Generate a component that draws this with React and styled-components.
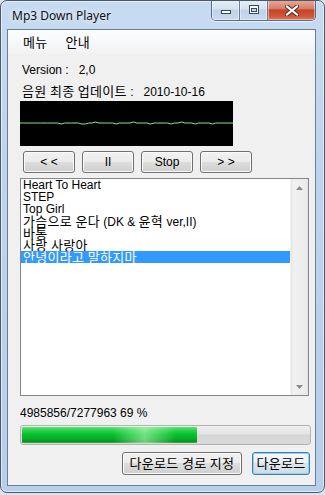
import React from 'react';
import styled, { createGlobalStyle } from 'styled-components';

const Global = createGlobalStyle`
  html, body { margin: 0; padding: 0; }
  body {
    width: 325px; height: 495px; overflow: hidden;
    background: #d9e4ef;
    font-family: "Liberation Sans", "Noto Sans CJK KR", sans-serif;
  }
`;

const FONT = `"Liberation Sans", "Noto Sans CJK KR", sans-serif`;

const Win = styled.div`
  box-sizing: border-box;
  width: 325px;
  height: 493px;
  border: 1px solid #4a5a6c;
  border-radius: 7px;
  background: linear-gradient(180deg, #c6dbf1 0%, #bcd4ed 35%, #b6cfea 100%);
  box-shadow: inset 0 0 0 1px rgba(255, 255, 255, 0.55);
  display: flex;
  flex-direction: column;
  padding: 0 8px 6px 6px;
  overflow: hidden;
`;

const TitleBar = styled.div`
  height: 28px;
  display: flex;
  align-items: flex-start;
  flex-shrink: 0;
`;

const Title = styled.div`
  padding: 9px 0 0 5px;
  font: 12px/12px "Noto Sans", "Liberation Sans", sans-serif;
  color: #111;
  text-shadow: 0 0 6px rgba(255, 255, 255, 0.9);
`;

const Caption = styled.div`
  margin-left: auto;
  margin-right: 0;
  margin-top: -1px;
  height: 20px;
  display: flex;
  border: 1px solid #5b6c82;
  border-top: none;
  border-radius: 0 0 5px 5px;
  overflow: hidden;
  box-shadow: 0 1px 0 rgba(255, 255, 255, 0.6);
`;

const CapBtn = styled.div`
  width: ${(p) => p.$w}px;
  display: flex;
  align-items: center;
  justify-content: center;
  border-left: ${(p) => (p.$first ? 'none' : '1px solid #6c7d92')};
  background: ${(p) =>
    p.$close
      ? 'linear-gradient(180deg, #e8ab9c 0%, #d98068 42%, #c6442b 50%, #cf5536 80%, #dd7a5a 100%)'
      : 'linear-gradient(180deg, #e6eef7 0%, #d5e2f0 45%, #bfd2e8 50%, #c8daef 100%)'};
  box-shadow: inset 0 0 0 1px rgba(255, 255, 255, 0.45);
`;

const Client = styled.div`
  flex: 1;
  display: flex;
  flex-direction: column;
  border: 1px solid #6e7e90;
  background: #f0f0f0;
`;

const MenuBar = styled.div`
  height: 23px;
  display: flex;
  padding-left: 6px;
  background: linear-gradient(180deg, #fcfdfd 0%, #f6f7f9 60%, #f1f3f5 100%);
  flex-shrink: 0;
`;

const MenuItem = styled.div`
  padding: 0 9px;
  font: 12px/23px ${FONT};
  color: #000;
`;

const Ko = styled.span`
  font-family: "Noto Sans CJK KR", sans-serif;
  font-size: 13px;
  letter-spacing: 0.3px;
`;

const Body = styled.div`
  display: flex;
  flex-direction: column;
  padding: 0 4px 0 12px;
`;

const Label = styled.div`
  margin-top: ${(p) => p.$mt}px;
  padding-left: ${(p) => p.$pl || 0}px;
  font: 12px/12px ${FONT};
  color: #000;
  white-space: pre;
  height: 12px;
`;

const Visual = styled.div`
  margin-top: 4px;
  width: 213px;
  height: 45px;
  background: #000;
  display: flex;
  align-items: center;
`;

const Controls = styled.div`
  margin-top: 5px;
  padding-left: 3px;
  display: flex;
  gap: 7px;
`;

const Btn = styled.button`
  box-sizing: border-box;
  width: ${(p) => p.$w}px;
  height: ${(p) => p.$h || 22}px;
  padding: 0;
  border: 1px solid ${(p) => (p.$focus ? '#3c7fb1' : '#707070')};
  border-radius: 3px;
  background: ${(p) =>
    p.$focus
      ? 'linear-gradient(180deg, #f4f8fb 0%, #eaf0f5 50%, #dbe4ec 50%, #d2dce5 100%)'
      : 'linear-gradient(180deg, #f2f2f2 0%, #ebebeb 50%, #dddddd 50%, #cfcfcf 100%)'};
  box-shadow: inset 0 0 0 1px ${(p) => (p.$focus ? '#8fd0f3' : '#fbfbfb')};
  font: 12px/12px ${FONT};
  color: #000;
  white-space: pre;
`;

const List = styled.div`
  margin-top: 5px;
  box-sizing: border-box;
  width: 289px;
  height: 218px;
  border: 1px solid #828790;
  background: #fff;
  display: flex;
`;

const Items = styled.div`
  flex: 1;
  display: flex;
  flex-direction: column;
`;

const Item = styled.div`
  height: 12px;
  padding-left: 2px;
  font: 12px/12px ${FONT};
  white-space: pre;
  color: ${(p) => (p.$sel ? '#fff' : '#000')};
  background: ${(p) => (p.$sel ? '#3399ff' : 'transparent')};
`;

const ScrollBar = styled.div`
  width: 17px;
  display: flex;
  flex-direction: column;
  justify-content: space-between;
  align-items: center;
  background: linear-gradient(90deg, #e4e4e4 0%, #f1f1f1 15%, #ececec 85%, #e2e2e2 100%);
  border-left: 1px solid #f6f6f6;
`;

const Arrow = styled.div`
  width: 17px;
  height: 17px;
  display: flex;
  align-items: center;
  justify-content: center;
`;

const Track = styled.div`
  margin-top: 6px;
  box-sizing: border-box;
  width: 291px;
  height: 20px;
  border: 1px solid #b3b3b3;
  border-radius: 3px;
  padding: 1px;
  background: linear-gradient(180deg, #f0f0f0 0%, #e3e3e3 45%, #d5d5d5 50%, #dadada 100%);
  display: flex;
`;

const Fill = styled.div`
  height: 100%;
  border-radius: 1px;
  background:
    linear-gradient(90deg, rgba(255,255,255,0) 0%, rgba(255,255,255,0) 52%, rgba(200,255,200,0.55) 70%, rgba(255,255,255,0) 88%),
    linear-gradient(180deg, #64e072 0%, #2fd34f 20%, #06c22f 45%, #04b22a 70%, #0b921f 90%, #36b24a 100%);
`;

const Actions = styled.div`
  margin-top: 7px;
  padding-right: 1px;
  display: flex;
  justify-content: flex-end;
  gap: 10px;
`;

const HANGUL = /([\uac00-\ud7a3\u3131-\u318e]+)/;

function T({ children }) {
  return String(children)
    .split(HANGUL)
    .map((part, i) => (HANGUL.test(part) ? <Ko key={i}>{part}</Ko> : part));
}

const songs = [
  'Heart To Heart',
  'STEP',
  'Top Girl',
  '가슴으로 운다 (DK & 윤혁 ver,II)',
  '바통',
  '사랑 사랑아',
  '안녕이라고 말하지마',
];

const wave = [22,22,22,22,22,22,22,22,22,22,22,22,23,22,22,22,22,22,23,23,22,22,21,22,22,22,22,22,23,22,22,22,22,21,22,22,22,22,23,22,22,22,22,22,23,22,22,21,22,22,22,23,22,22,22,22,23,22,22,22,22,22,22];

function Wave() {
  const step = 213 / (wave.length - 1);
  const pts = wave.map((y, i) => `${(i * step).toFixed(1)},${y}`).join(' ');
  return (
    <svg width="213" height="45" viewBox="0 0 213 45">
      <polyline points={pts} fill="none" stroke="#8ee88e" strokeWidth="1" />
    </svg>
  );
}

export default function App() {
  const received = 4985856;
  const total = 7277963;
  const pct = Math.round((received / total) * 100);
  const shown = 61;
  return (
    <>
      <Global />
      <Win>
        <TitleBar>
          <Title>Mp3 Down Player</Title>
          <Caption>
            <CapBtn $w={27} $first>
              <svg width="12" height="10" viewBox="0 0 12 10">
                <rect x="1.5" y="5.5" width="9" height="3" fill="#fff" stroke="#38495d" />
              </svg>
            </CapBtn>
            <CapBtn $w={27}>
              <svg width="12" height="10" viewBox="0 0 12 10">
                <rect x="1.5" y="0.5" width="9" height="8" fill="#fff" stroke="#38495d" />
                <rect x="3.5" y="3.5" width="5" height="3" fill="#c9d8ea" stroke="#38495d" />
              </svg>
            </CapBtn>
            <CapBtn $w={47} $close>
              <svg width="14" height="11" viewBox="0 0 14 11">
                <path d="M2 1.5 L12 9.5 M12 1.5 L2 9.5" stroke="#4a2a22" strokeWidth="4" strokeLinecap="square" />
                <path d="M2 1.5 L12 9.5 M12 1.5 L2 9.5" stroke="#fff" strokeWidth="2.2" strokeLinecap="square" />
              </svg>
            </CapBtn>
          </Caption>
        </TitleBar>
        <Client>
          <MenuBar>
            <MenuItem><T>메뉴</T></MenuItem>
            <MenuItem><T>안내</T></MenuItem>
          </MenuBar>
          <Body>
            <Label $mt={11} $pl={2}>{'Version :   2,0'}</Label>
            <Label $mt={9} $pl={2}><T>{'음원 최종 업데이트 :   2010-10-16'}</T></Label>
            <Visual>
              <Wave />
            </Visual>
            <Controls>
              <Btn $w={52}>{'< <'}</Btn>
              <Btn $w={52}>II</Btn>
              <Btn $w={52}>Stop</Btn>
              <Btn $w={52}>{'> >'}</Btn>
            </Controls>
            <List>
              <Items>
                {songs.map((s, i) => (
                  <Item key={s} $sel={i === songs.length - 1}><T>{s}</T></Item>
                ))}
              </Items>
              <ScrollBar>
                <Arrow>
                  <svg width="7" height="4" viewBox="0 0 7 4"><path d="M0 4 L3.5 0 L7 4 Z" fill="#8a8a8a" /></svg>
                </Arrow>
                <Arrow>
                  <svg width="7" height="4" viewBox="0 0 7 4"><path d="M0 0 L3.5 4 L7 0 Z" fill="#8a8a8a" /></svg>
                </Arrow>
              </ScrollBar>
            </List>
            <Label $mt={11}>{`${received}/${total} ${pct} %`}</Label>
            <Track>
              <Fill style={{ width: `${shown}%` }} />
            </Track>
            <Actions>
              <Btn $w={120} $h={23}><T>다운로드 경로 지정</T></Btn>
              <Btn $w={58} $h={23} $focus><T>다운로드</T></Btn>
            </Actions>
          </Body>
        </Client>
      </Win>
    </>
  );
}
